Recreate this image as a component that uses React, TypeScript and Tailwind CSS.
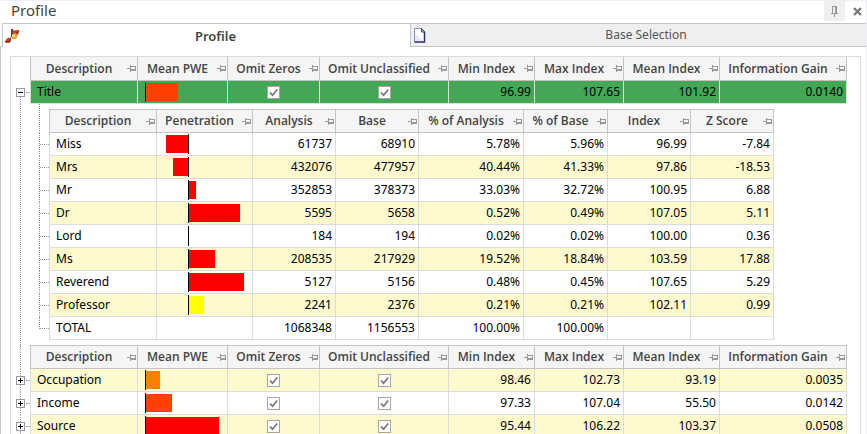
import React, { useState } from 'react';

type Summary = {
  name: string;
  pwe: number;
  color: string;
  values: string[];
};

const SUMMARY_COLUMNS = [
  { label: 'Description', width: 108 },
  { label: 'Mean PWE', width: 90 },
  { label: 'Omit Zeros', width: 92 },
  { label: 'Omit Unclassified', width: 129 },
  { label: 'Min Index', width: 86 },
  { label: 'Max Index', width: 89 },
  { label: 'Mean Index', width: 96 },
  { label: 'Information Gain', width: 127 },
];

const DETAIL_COLUMNS = [
  { label: 'Description', width: 108 },
  { label: 'Penetration', width: 96 },
  { label: 'Analysis', width: 83 },
  { label: 'Base', width: 83 },
  { label: '% of Analysis', width: 105 },
  { label: '% of Base', width: 84 },
  { label: 'Index', width: 83 },
  { label: 'Z Score', width: 83 },
];

const TITLE: Summary = { name: 'Title', pwe: 32, color: '#ff4000', values: ['96.99', '107.65', '101.92', '0.0140'] };

const OTHERS: Summary[] = [
  { name: 'Occupation', pwe: 14, color: '#ff8000', values: ['98.46', '102.73', '93.19', '0.0035'] },
  { name: 'Income', pwe: 26, color: '#ff4000', values: ['97.33', '107.04', '55.50', '0.0142'] },
  { name: 'Source', pwe: 73, color: '#ff0000', values: ['95.44', '106.22', '103.37', '0.0508'] },
];

const DETAILS = [
  { name: 'Miss', bar: -22, color: '#ff0000', values: ['61737', '68910', '5.78%', '5.96%', '96.99', '-7.84'] },
  { name: 'Mrs', bar: -15, color: '#ff0000', values: ['432076', '477957', '40.44%', '41.33%', '97.86', '-18.53'] },
  { name: 'Mr', bar: 7, color: '#ff0000', values: ['352853', '378373', '33.03%', '32.72%', '100.95', '6.88'] },
  { name: 'Dr', bar: 51, color: '#ff0000', values: ['5595', '5658', '0.52%', '0.49%', '107.05', '5.11'] },
  { name: 'Lord', bar: 0, color: '#ff0000', values: ['184', '194', '0.02%', '0.02%', '100.00', '0.36'] },
  { name: 'Ms', bar: 26, color: '#ff0000', values: ['208535', '217929', '19.52%', '18.84%', '103.59', '17.88'] },
  { name: 'Reverend', bar: 55, color: '#ff0000', values: ['5127', '5156', '0.48%', '0.45%', '107.65', '5.29'] },
  { name: 'Professor', bar: 15, color: '#ffff00', values: ['2241', '2376', '0.21%', '0.21%', '102.11', '0.99'] },
  { name: 'TOTAL', bar: null, color: '', values: ['1068348', '1156553', '100.00%', '100.00%', '', ''] },
];

const PinIcon = () => (
  <svg className="w-[9px] h-[7px] shrink-0" viewBox="0 0 9 7" fill="none" stroke="#999" shapeRendering="crispEdges">
    <path d="M0 3.5h3M3.5 0v7M4 1.5h4.5v4H4M4 4.5h4" />
  </svg>
);

const ProfileIcon = () => (
  <svg className="w-4 h-4" viewBox="0 0 16 16">
    <path d="M7 2h7v2l-1 1v1H7z" fill="#c8391c" />
    <path d="M8 2.500h4" stroke="#ee7350" />
    <path d="M11 5h3M12 6v2" stroke="#8a2a16" />
    <path d="M7 5h3l2 2v2.500l-1.500 1.500H7z" fill="#eda32c" />
    <path d="M7.500 7h2.500v2H7.500z" fill="#ffe96a" />
    <path d="M6.500 1.500v7L5.500 10v3.500M6 1.500h2M6.500 5.500h2" fill="none" stroke="#4f4540" />
    <path d="M0 13.500l1.500-2.500 2.500-1.500 1 1.500v3.500H1z" fill="#d0320f" />
    <path d="M0 14h5" stroke="#7a2412" />
  </svg>
);

const PageIcon = () => (
  <svg className="w-3 h-[15px]" viewBox="0 0 12 15">
    <path d="M.5.5h7l3.500 3.500v10.500H.5z" fill="#fff" />
    <path d="M1 5l9 9H1z" fill="#e3eaf6" />
    <path d="M.5 14V.5H7.500" fill="none" stroke="#8795b8" />
    <path d="M7.500.5V4H11z" fill="#c5cde0" stroke="#39436d" />
    <path d="M10.500 4v10H.5" fill="none" stroke="#28305c" strokeWidth="1.500" />
  </svg>
);

const Tick = ({ label }: { label: string }) => {
  const [checked, setChecked] = useState(true);
  return (
    <div className="flex justify-center">
      <div className="grid">
        <input
          type="checkbox"
          aria-label={label}
          checked={checked}
          onChange={(e) => setChecked(e.target.checked)}
          className="peer col-start-1 row-start-1 appearance-none w-[13px] h-[13px] bg-white border border-[#a6a6a6]"
        />
        <svg className="col-start-1 row-start-1 w-[13px] h-[13px] pointer-events-none invisible peer-checked:visible" viewBox="0 0 13 13" fill="none" stroke="#777" strokeWidth="1.700">
          <path d="M3 6.500l2.500 2.700 4.700-5.700" />
        </svg>
      </div>
    </div>
  );
};

const Bar = ({ value, color }: { value: number; color: string }) => (
  <div className="h-[18px]" style={{ width: Math.abs(value), backgroundColor: color }} />
);

const Columns = ({ columns }: { columns: { label: string; width: number }[] }) => (
  <colgroup>
    <col className="w-[19px]" />
    {columns.map((c) => <col key={c.label} style={{ width: c.width }} />)}
  </colgroup>
);

const HeaderCells = ({ columns, topLine }: { columns: { label: string; width: number }[]; topLine: boolean }) => (
  <>
    {columns.map((c) => (
      <th
        key={c.label}
        scope="col"
        className={`h-6 p-0 bg-[#f5f5f5] border-r border-b border-[#c4c4c4] first-of-type:border-l font-['Open_Sans','Noto_Sans',sans-serif] font-semibold text-[#444] ${topLine ? 'border-t' : ''}`}
      >
        <div className="flex items-center pr-px">
          <span className="flex-1 text-center whitespace-nowrap">{c.label}</span>
          <PinIcon />
        </div>
      </th>
    ))}
  </>
);

const CELL = 'h-[23px] p-0 border-r border-b border-[#dcdcdc]';

const SummaryRow = ({ row, tone, open, onToggle }: { row: Summary; tone: string; open: boolean; onToggle?: () => void }) => (
  <tr className={tone}>
    <td className="relative h-[23px] p-0 bg-white">
      <span className={`absolute left-[9px] bottom-0 border-l border-dotted border-[#999] ${open ? 'top-3' : 'top-0'}`} />
      <span className="absolute left-[15px] right-0 top-[11px] border-t border-dotted border-[#999]" />
      <button
        type="button"
        onClick={onToggle}
        aria-label={`${open ? 'Collapse' : 'Expand'} ${row.name}`}
        className="relative block ml-[5px] w-[9px] h-[9px] bg-white border border-[#999]"
      >
        <svg className="w-[7px] h-[7px]" viewBox="0 0 7 7" stroke="#000" shapeRendering="crispEdges">
          <path d={open ? 'M1 3.500h5' : 'M1 3.500h5M3.500 1v5'} />
        </svg>
      </button>
    </td>
    <td className={`${CELL} border-l pl-[6px]`}>{row.name}</td>
    <td className={`${CELL} pl-[7px]`}>
      <div className="flex items-center">
        <div className="w-px h-5 bg-black" />
        <Bar value={row.pwe} color={row.color} />
      </div>
    </td>
    <td className={CELL}><Tick label={`Omit zeros for ${row.name}`} /></td>
    <td className={CELL}><Tick label={`Omit unclassified for ${row.name}`} /></td>
    {row.values.map((v, i) => <td key={i} className={`${CELL} pr-[3px] text-right`}>{v}</td>)}
  </tr>
);

const DetailTable = () => (
  <table className="table-fixed w-[744px] border-separate border-spacing-0">
    <Columns columns={DETAIL_COLUMNS} />
    <thead>
      <tr>
        <td className="relative p-0">
          <span className="absolute left-[9px] -top-[5px] bottom-0 border-l border-dotted border-[#999]" />
        </td>
        <HeaderCells columns={DETAIL_COLUMNS} topLine />
      </tr>
    </thead>
    <tbody>
      {DETAILS.map((d, i) => (
        <tr key={d.name} className={i % 2 ? 'bg-[#fffacd]' : 'bg-white'}>
          <td className="relative p-0 bg-white">
            <span className={`absolute left-[9px] top-0 border-l border-dotted border-[#999] ${i === DETAILS.length - 1 ? 'h-3' : 'bottom-0'}`} />
            <span className="absolute left-[10px] right-0 top-[11px] border-t border-dotted border-[#999]" />
          </td>
          <td className={`${CELL} border-l pl-[6px]`}>{d.name}</td>
          <td className={CELL}>
            {d.bar !== null && (
              <div className="flex items-center">
                <div className="w-[31px] flex justify-end">{d.bar < 0 && <Bar value={d.bar} color={d.color} />}</div>
                <div className="w-px h-5 bg-black" />
                {d.bar > 0 && <Bar value={d.bar} color={d.color} />}
              </div>
            )}
          </td>
          {d.values.map((v, n) => <td key={n} className={`${CELL} pr-[3px] text-right`}>{v}</td>)}
        </tr>
      ))}
    </tbody>
  </table>
);

const App: React.FC = () => {
  const [open, setOpen] = useState(true);

  return (
    <div className="h-screen flex flex-col overflow-hidden bg-white border-t border-r border-[#eaf0fa] font-['Noto_Sans','Open_Sans',sans-serif] text-xs leading-4 text-black">
      <header className="h-[22px] shrink-0 flex items-start pl-[11px]">
        <h1 className="flex-1 text-[15px] leading-[18px] text-[#444]">Profile</h1>
        <button type="button" aria-label="Pin panel" className="w-[21px] h-5 mr-2 grid place-items-center bg-[#efefef]">
          <svg className="w-[7px] h-[11px]" viewBox="0 0 7 11" fill="none" stroke="#999" shapeRendering="crispEdges">
            <path d="M1.500 7V.5h4V7M4.500 1v6M0 7.500h7M3.500 8v3" />
          </svg>
        </button>
        <button type="button" aria-label="Close panel" className="h-5 mr-1">
          <svg className="w-[9px] h-[9px]" viewBox="0 0 9 9" stroke="#777" strokeWidth="2.400">
            <path d="M1 1l7 7M8 1l-7 7" />
          </svg>
        </button>
      </header>

      <div role="tablist" className="h-6 shrink-0 flex">
        <div className="w-[2px] border-b border-[#c4c4c4]" />
        <button type="button" role="tab" aria-selected="true" className="w-[408px] flex items-center pl-[2px] border-t border-l border-[#c4c4c4] text-[13px] font-semibold text-[#444]">
          <ProfileIcon />
          <span className="flex-1 text-center">Profile</span>
        </button>
        <button type="button" role="tab" aria-selected="false" className="flex-1 flex items-center pl-[3px] bg-[#efefef] border border-r-0 border-[#c4c4c4] text-[#555]">
          <PageIcon />
          <span className="flex-1 text-center">Base Selection</span>
        </button>
      </div>

      <main className="flex-1 min-h-0 flex border-l border-[#c4c4c4] pt-[9px] pl-[9px] pr-[5px]">
        <div className="flex-1 overflow-hidden border border-b-0 border-[#dcdcdc]">
          <table className="table-fixed w-[836px] border-separate border-spacing-0">
            <Columns columns={SUMMARY_COLUMNS} />
            <thead>
              <tr>
                <td className="p-0" />
                <HeaderCells columns={SUMMARY_COLUMNS} topLine={false} />
              </tr>
            </thead>
            <tbody>
              <SummaryRow row={TITLE} tone="bg-[#43a756]" open={open} onToggle={() => setOpen(!open)} />
              {open && (
                <tr>
                  <td className="relative p-0">
                    <span className="absolute left-[9px] inset-y-0 border-l border-dotted border-[#999]" />
                  </td>
                  <td colSpan={8} className="p-0 py-[5px]">
                    <DetailTable />
                  </td>
                </tr>
              )}
              <tr>
                <td className="relative p-0">
                  <span className="absolute left-[9px] inset-y-0 border-l border-dotted border-[#999]" />
                </td>
                <HeaderCells columns={SUMMARY_COLUMNS} topLine />
              </tr>
              {OTHERS.map((row, i) => (
                <SummaryRow key={row.name} row={row} tone={i % 2 ? 'bg-white' : 'bg-[#fffacd]'} open={false} />
              ))}
            </tbody>
          </table>
        </div>
      </main>
    </div>
  );
};

export default App;
